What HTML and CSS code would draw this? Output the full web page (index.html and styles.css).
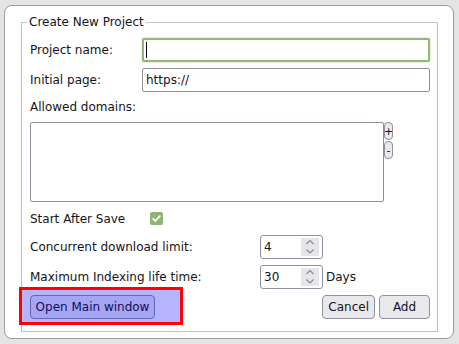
FILE: index.html
```html
<!DOCTYPE html>
<html lang="en">
<head>
  <meta charset="UTF-8">
  <meta name="viewport" content="width=device-width, initial-scale=1.0">
  <title>Create New Project</title>
  <link rel="stylesheet" href="styles.css">
</head>
<body>
  <div class="dialog">
    <fieldset class="project">
      <legend class="legend">Create New Project</legend>
      <div class="form">

        <div class="row">
          <label for="name" class="label">Project name:</label>
          <div class="name-field">
            <input type="text" id="name" class="text-input focused" />
            <span class="caret"></span>
          </div>
        </div>

        <div class="row">
          <label for="page" class="label">Initial page:</label>
          <input type="text" id="page" class="text-input" value="https://" />
        </div>

        <div class="caption">Allowed domains:</div>

        <div class="domains">
          <textarea class="domain-list"></textarea>
          <div class="list-buttons">
            <button class="tiny">+</button>
            <button class="tiny">-</button>
          </div>
        </div>

        <div class="row check-row">
          <span class="label mid">Start After Save</span>
          <span class="check">
            <svg width="13" height="13" viewBox="0 0 13 13"><path d="M3.2 6.8 L5.4 9 L9.8 4.2" fill="none" stroke="#fff" stroke-width="1.8" stroke-linecap="round" stroke-linejoin="round"/></svg>
          </span>
        </div>

        <div class="row">
          <label for="limit" class="label wide">Concurrent download limit:</label>
          <div class="num">
            <input type="text" id="limit" class="num-input" value="4" />
            <span class="spin">
              <svg width="18" height="18" viewBox="0 0 18 18"><path d="M5.5 6 L9 2.5 L12.5 6 M5.5 11.5 L9 15 L12.5 11.5" fill="none" stroke="#8a8a90" stroke-width="1.2"/></svg>
            </span>
          </div>
        </div>

        <div class="row">
          <label for="life" class="label wide">Maximum Indexing life time:</label>
          <div class="num">
            <input type="text" id="life" class="num-input" value="30" />
            <span class="spin">
              <svg width="18" height="18" viewBox="0 0 18 18"><path d="M5.5 6 L9 2.5 L12.5 6 M5.5 11.5 L9 15 L12.5 11.5" fill="none" stroke="#8a8a90" stroke-width="1.2"/></svg>
            </span>
          </div>
          <span class="unit">Days</span>
        </div>

        <div class="actions">
          <span class="highlight">
            <button class="btn main">Open Main window</button>
          </span>
          <button class="btn push">Cancel</button>
          <button class="btn">Add</button>
        </div>

      </div>
    </fieldset>
  </div>
</body>
</html>
```

FILE: styles.css
```css
body {
  margin: 0;
  padding: 0;
  font-family: "DejaVu Sans", sans-serif;
  font-size: 12px;
  color: #15141a;
  background-color: #e4e4e4;
}
.dialog {
  margin: 5px 0 0 4px;
  width: 450px;
  height: 334px;
  box-sizing: border-box;
  background-color: white;
  border: 1px solid #9c9c9c;
  border-radius: 8px;
  padding: 9px 15px 8px 16px;
}
.project {
  margin: 0;
  padding: 9px 7px 12px 8px;
  border: 1px solid #c2c2c2;
  min-width: 0;
}
.legend {
  font-size: 12px;
  line-height: 14px;
  padding: 0 2px;
  margin-left: -3px;
}
.form {
  display: flex;
  flex-direction: column;
  gap: 6px;
}
.row {
  display: flex;
  align-items: center;
  height: 24px;
  line-height: 14px;
}
.label {
  width: 112px;
  flex: none;
}
.label.mid {
  width: 120px;
}
.label.wide {
  width: 230px;
}
.name-field {
  position: relative;
  flex: 1;
  display: flex;
}
.text-input {
  flex: 1;
  width: 0;
  height: 24px;
  box-sizing: border-box;
  border: 1px solid #8f8f9d;
  border-radius: 2px;
  padding: 0 3px;
  font-family: inherit;
  font-size: 12px;
  color: #15141a;
  outline: none;
}
.text-input.focused {
  border: 2px solid #95b57a;
  box-shadow: 0 0 0 1px #eaf3dd;
}
.caret {
  position: absolute;
  left: 4px;
  top: 4px;
  width: 1px;
  height: 16px;
  background-color: #000;
}
.caption {
  height: 18px;
  line-height: 18px;
}
.domains {
  display: flex;
  height: 80px;
}
.domain-list {
  width: 354px;
  height: 80px;
  box-sizing: border-box;
  border: 1px solid #8f8f9d;
  border-radius: 2px;
  resize: none;
  margin: 0;
  outline: none;
}
.list-buttons {
  display: flex;
  flex-direction: column;
  gap: 1px;
}
.tiny {
  width: 9px;
  height: 18px;
  padding: 0;
  border: 1px solid #8f8f9d;
  border-radius: 4px;
  background-color: #e9e9ed;
  font-family: inherit;
  font-size: 11px;
  line-height: 1;
  color: #15141a;
  display: flex;
  align-items: center;
  justify-content: center;
  overflow: visible;
}
.check-row {
  height: 21px;
}
.check {
  width: 13px;
  height: 13px;
  border-radius: 2px;
  background-color: #8fb573;
  display: flex;
}
.num {
  display: flex;
  align-items: center;
  width: 63px;
  height: 24px;
  box-sizing: border-box;
  border: 1px solid #8f8f9d;
  border-radius: 3px;
  padding: 0 3px 0 3px;
}
.num-input {
  flex: 1;
  width: 0;
  border: none;
  padding: 0;
  font-family: inherit;
  font-size: 12px;
  color: #15141a;
  outline: none;
}
.spin {
  width: 18px;
  height: 18px;
  background-color: #e6e6ea;
  display: flex;
}
.unit {
  margin-left: 3px;
}
.actions {
  display: flex;
  gap: 4px;
  height: 24px;
}
.push {
  margin-left: auto;
}
.btn {
  height: 24px;
  min-width: 51px;
  padding: 0 5px;
  border: 1px solid #8f8f9d;
  border-radius: 4px;
  background-color: #e9e9ed;
  font-family: inherit;
  font-size: 12px;
  color: #15141a;
}
.btn.main {
  width: 125px;
  padding: 0;
}
.highlight {
  position: relative;
  display: flex;
}
.highlight::after {
  content: "";
  position: absolute;
  top: -8px;
  left: -11px;
  right: -28px;
  bottom: -6px;
  border: 3px solid #ff0000;
  background-color: rgba(0, 0, 255, 0.29);
}
```
